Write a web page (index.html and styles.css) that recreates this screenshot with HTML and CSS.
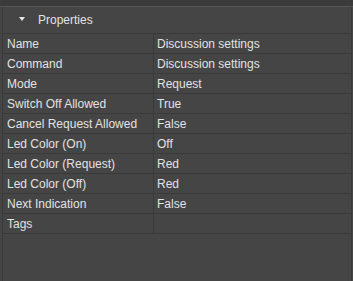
FILE: index.html
```html
<!DOCTYPE html>
<html lang="en">
<head>
  <meta charset="UTF-8">
  <title>Properties</title>
  <link rel="stylesheet" href="styles.css">
</head>
<body>
  <div class="topbar"></div>
  <div class="panel">
    <div class="header">
      <svg class="arrow" width="6" height="4" viewBox="0 0 6 4"><path d="M0 0 L6 0 L3 4 Z" fill="#e6e6e6"/></svg>
      <span>Properties</span>
    </div>
    <div class="grid">
      <div class="row"><div class="key">Name</div><div class="val">Discussion settings</div></div>
      <div class="row"><div class="key">Command</div><div class="val">Discussion settings</div></div>
      <div class="row"><div class="key">Mode</div><div class="val">Request</div></div>
      <div class="row"><div class="key">Switch Off Allowed</div><div class="val">True</div></div>
      <div class="row"><div class="key">Cancel Request Allowed</div><div class="val">False</div></div>
      <div class="row"><div class="key">Led Color (On)</div><div class="val">Off</div></div>
      <div class="row"><div class="key">Led Color (Request)</div><div class="val">Red</div></div>
      <div class="row"><div class="key">Led Color (Off)</div><div class="val">Red</div></div>
      <div class="row"><div class="key">Next Indication</div><div class="val">False</div></div>
      <div class="row"><div class="key">Tags</div><div class="val"></div></div>
    </div>
  </div>
</body>
</html>
```
FILE: styles.css
```css
html, body {
  margin: 0;
  height: 100%;
  background-color: #454545;
  font-family: "Liberation Sans", Arial, sans-serif;
  font-size: 12px;
  color: #e2e2e2;
  overflow: hidden;
}
.topbar {
  height: 6px;
  background-color: #3b3b3b;
  border-bottom: 1px solid #575757;
}
.panel {
  margin: 0 1px 0 2px;
  height: 274px;
  border-left: 1px solid #3a3a3a;
  border-right: 1px solid #3a3a3a;
}
.header {
  display: flex;
  align-items: center;
  height: 26px;
  padding-left: 16px;
}
.arrow {
  margin-right: 13px;
  margin-top: -2px;
}
.grid {
  border-top: 1px solid #3a3a3a;
}
.row {
  display: flex;
  height: 19px;
  border-bottom: 1px solid #3a3a3a;
}
.key {
  width: 146px;
  padding: 1px 0 0 4px;
  line-height: 19px;
  border-right: 1px solid #3a3a3a;
}
.val {
  flex: 1;
  padding: 1px 0 0 3px;
  line-height: 19px;
}
```
